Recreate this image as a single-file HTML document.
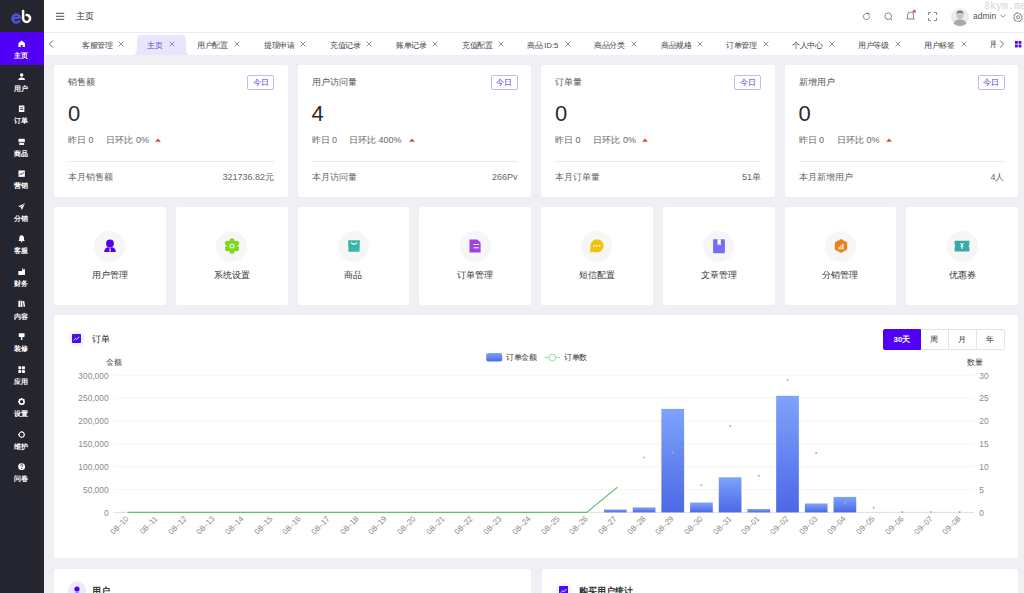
<!DOCTYPE html><html><head><meta charset="utf-8"><style>
*{box-sizing:border-box;margin:0;padding:0}
html,body{width:1024px;height:593px;overflow:hidden;background:#efeff4;font-family:"Liberation Sans",sans-serif;color:#333}
.a{position:absolute;white-space:nowrap}
#side{position:absolute;left:0;top:0;width:44px;height:593px;background:#25252f}
.sl{position:absolute;left:-0.7px;width:44px;text-align:center;font-size:7.3px;line-height:8px;font-weight:bold;color:#fff}
.sic{position:absolute;left:17.6px}
#hdr{position:absolute;left:44px;top:0;width:980px;height:33px;background:#fff;border-bottom:1px solid #ededf1}
#tabs{position:absolute;left:44px;top:33px;width:980px;height:22px;background:#fff}
.tb{position:absolute;top:40.6px;font-size:8px;line-height:9px;color:#444;white-space:nowrap;transform:scale(0.95);transform-origin:0 0}
.tx{position:absolute;top:41.1px}
.card{position:absolute;background:#fff;border-radius:2px}
.st{position:absolute;font-size:9px;line-height:9px;color:#555;white-space:nowrap}
.badge{position:absolute;width:27px;height:15.4px;border:1px solid #c2b8f3;border-radius:2px;color:#5a33e6;font-size:7.5px;line-height:13.5px;text-align:center;font-weight:500}
.big{position:absolute;font-size:22px;line-height:22px;color:#2b2b2b}
.sub{position:absolute;font-size:9px;line-height:9px;color:#666;white-space:nowrap}
.hr{position:absolute;height:1px;background:#ebebef}
.ic{position:absolute;width:31px;height:31px;border-radius:50%;background:#f6f6f7}
.nl{position:absolute;left:0;width:100%;text-align:center;font-size:9px;line-height:9px;color:#333;font-weight:500}
.yl{position:absolute;font-size:8.4px;line-height:8px;color:#8a8a8a;white-space:nowrap}
.xl{position:absolute;font-size:8px;line-height:8px;color:#8a8a8a;white-space:nowrap;transform-origin:100% 0;transform:rotate(-45deg)}
.btn{position:absolute;top:329px;height:20.8px;font-size:8px;line-height:19.2px;font-weight:500;text-align:center;color:#333;border:1px solid #e4e4e8;background:#fff}
</style></head><body>
<div id="side">
<svg class="a" style="left:0;top:0" width="44" height="32" viewBox="0 0 44 32">
<path d="M13.4 18.5 L20 17.3 A3.9 3.9 0 1 0 19.3 21" fill="none" stroke="#5052d8" stroke-width="2.5" stroke-linecap="round"/>
<path d="M23.1 11 V18.4 A3.5 3.5 0 1 0 26.6 14.9" fill="none" stroke="#fff" stroke-width="2.5" stroke-linecap="round"/>
</svg>
<div class="a" style="left:0;top:32px;width:44px;height:33px;background:#5000f5"></div>
<div class="sl" style="top:52.10px">主页</div>
<svg class="sic" style="top:40.00px" width="7.3" height="7.3" viewBox="0 0 8 8"><path d="M4 0.6 L7.6 3.6 V7.6 H5 V5.4 H3 V7.6 H0.4 V3.6 Z" fill="#fff"/></svg>
<div class="sl" style="top:84.65px">用户</div>
<svg class="sic" style="top:72.55px" width="7.3" height="7.3" viewBox="0 0 8 8"><circle cx="4" cy="2.2" r="1.9" fill="#fff"/><path d="M0.3 7.6 Q0.5 4.8 4 4.8 Q7.5 4.8 7.7 7.6 Z" fill="#fff"/></svg>
<div class="sl" style="top:117.20px">订单</div>
<svg class="sic" style="top:105.10px" width="7.3" height="7.3" viewBox="0 0 8 8"><rect x="1" y="0.5" width="6" height="7.2" rx="0.6" fill="#fff"/><rect x="2.3" y="2.6" width="3.4" height="0.9" fill="#25252f"/><rect x="2.3" y="4.6" width="3.4" height="0.9" fill="#25252f"/></svg>
<div class="sl" style="top:149.75px">商品</div>
<svg class="sic" style="top:137.65px" width="7.3" height="7.3" viewBox="0 0 8 8"><rect x="0.5" y="0.8" width="7" height="4.2" rx="1" fill="#fff"/><rect x="1.3" y="5.6" width="5.4" height="2" fill="#fff"/><rect x="0.5" y="4.2" width="7" height="0.7" fill="#25252f"/></svg>
<div class="sl" style="top:182.30px">营销</div>
<svg class="sic" style="top:170.20px" width="7.3" height="7.3" viewBox="0 0 8 8"><rect x="0.5" y="0.5" width="7" height="7" fill="#fff"/><path d="M1.5 5.8 L3.3 3.8 L4.5 4.8 L6.6 2.3" fill="none" stroke="#25252f" stroke-width="0.9"/></svg>
<div class="sl" style="top:214.85px">分销</div>
<svg class="sic" style="top:202.75px" width="7.3" height="7.3" viewBox="0 0 8 8"><path d="M7.8 0.3 L0.3 3.6 L3 4.6 L4.2 7.7 Z" fill="#fff"/><path d="M7.8 0.3 L3 4.6" stroke="#25252f" stroke-width="0.6"/></svg>
<div class="sl" style="top:247.40px">客服</div>
<svg class="sic" style="top:235.30px" width="7.3" height="7.3" viewBox="0 0 8 8"><path d="M4 0.4 Q6.6 0.6 6.6 3.6 V5.6 L7.6 6.6 H0.4 L1.4 5.6 V3.6 Q1.4 0.6 4 0.4 Z" fill="#fff"/><circle cx="4" cy="7.3" r="0.8" fill="#fff"/></svg>
<div class="sl" style="top:279.95px">财务</div>
<svg class="sic" style="top:267.85px" width="7.3" height="7.3" viewBox="0 0 8 8"><path d="M0.4 3.4 H4.2 L5.4 2 L7.6 1.2 V7.6 H0.4 Z" fill="#fff"/><rect x="4.6" y="0.3" width="1" height="2.6" fill="#fff"/></svg>
<div class="sl" style="top:312.50px">内容</div>
<svg class="sic" style="top:300.40px" width="7.3" height="7.3" viewBox="0 0 8 8"><rect x="0.4" y="0.8" width="2" height="6.8" fill="#fff"/><rect x="2.9" y="0.8" width="2" height="6.8" fill="#fff"/><path d="M5.3 1.4 L6.8 1.0 L7.8 7.2 L6.3 7.6 Z" fill="#fff"/></svg>
<div class="sl" style="top:345.05px">装修</div>
<svg class="sic" style="top:332.95px" width="7.3" height="7.3" viewBox="0 0 8 8"><rect x="0.8" y="0.3" width="6.4" height="4" rx="0.5" fill="#fff"/><rect x="3.2" y="4.3" width="1.6" height="3.4" fill="#fff"/></svg>
<div class="sl" style="top:377.60px">应用</div>
<svg class="sic" style="top:365.50px" width="7.3" height="7.3" viewBox="0 0 8 8"><rect x="0.4" y="0.4" width="3.2" height="3.2" rx="0.5" fill="#fff"/><rect x="4.4" y="0.4" width="3.2" height="3.2" rx="0.5" fill="#fff"/><rect x="0.4" y="4.4" width="3.2" height="3.2" rx="0.5" fill="#fff"/><rect x="4.4" y="4.4" width="3.2" height="3.2" rx="0.5" fill="#fff"/></svg>
<div class="sl" style="top:410.15px">设置</div>
<svg class="sic" style="top:398.05px" width="7.3" height="7.3" viewBox="0 0 8 8"><circle cx="4" cy="4" r="2.6" fill="none" stroke="#fff" stroke-width="1.6"/><g stroke="#fff" stroke-width="1.5"><path d="M4 0 V1.6 M4 6.4 V8 M0 4 H1.6 M6.4 4 H8 M1.2 1.2 L2.2 2.2 M5.8 5.8 L6.8 6.8 M1.2 6.8 L2.2 5.8 M5.8 2.2 L6.8 1.2"/></g></svg>
<div class="sl" style="top:442.70px">维护</div>
<svg class="sic" style="top:430.60px" width="7.3" height="7.3" viewBox="0 0 8 8"><circle cx="4" cy="4" r="2.8" fill="none" stroke="#fff" stroke-width="1.1"/><g stroke="#fff" stroke-width="1.2"><path d="M4 0 V1.2 M4 6.8 V8 M0 4 H1.2 M6.8 4 H8"/></g></svg>
<div class="sl" style="top:475.25px">问卷</div>
<svg class="sic" style="top:463.15px" width="7.3" height="7.3" viewBox="0 0 8 8"><circle cx="4" cy="4" r="3.8" fill="#fff"/><path d="M2.8 3 Q2.8 1.8 4 1.8 Q5.2 1.8 5.2 2.9 Q5.2 3.6 4.3 4.1 V4.9" fill="none" stroke="#25252f" stroke-width="0.9"/><circle cx="4.2" cy="6.1" r="0.55" fill="#25252f"/></svg>
</div>
<div id="hdr"></div>
<svg class="a" style="left:55px;top:11px" width="10" height="10" viewBox="0 0 10 10"><g stroke="#4a4a4a" stroke-width="1"><path d="M1 2.3 H9.2 M1 5.3 H9.2 M1 8.3 H9.2"/></g></svg>
<div class="a" style="left:76px;top:12px;font-size:9px;line-height:9px;color:#333">主页</div>
<svg class="a" style="left:862px;top:12px" width="9" height="9" viewBox="0 0 9 9"><path d="M7.6 4.5 A3.1 3.1 0 1 1 6.3 2" fill="none" stroke="#777" stroke-width="0.9"/><path d="M5.2 0.8 L7.4 1.6 L6.6 3.6" fill="none" stroke="#777" stroke-width="0.9"/></svg>
<svg class="a" style="left:884px;top:12px" width="9" height="9" viewBox="0 0 9 9"><circle cx="4.2" cy="4.2" r="3.3" fill="none" stroke="#777" stroke-width="0.9"/><path d="M6.6 6.6 L8.2 8.2" stroke="#777" stroke-width="0.9"/></svg>
<svg class="a" style="left:906px;top:9px" width="11" height="12" viewBox="0 0 11 12"><path d="M4.5 3 Q7.5 3 7.5 6.2 V9 L8.4 10 H0.6 L1.5 9 V6.2 Q1.5 3 4.5 3 Z" fill="none" stroke="#777" stroke-width="0.9"/><circle cx="8.3" cy="2.3" r="1.6" fill="#e5484d"/></svg>
<svg class="a" style="left:928px;top:12px" width="9" height="9" viewBox="0 0 9 9"><g fill="none" stroke="#777" stroke-width="0.9"><path d="M0.5 3 V0.5 H3 M6 0.5 H8.5 V3 M8.5 6 V8.5 H6 M3 8.5 H0.5 V6"/></g></svg>
<svg class="a" style="left:951px;top:7.5px" width="18" height="18" viewBox="0 0 18 18"><circle cx="9" cy="9" r="9" fill="#ebebeb"/><ellipse cx="9" cy="7.4" rx="3.4" ry="4" fill="#c9c9c9"/><path d="M2.6 15.8 Q3.6 11.6 9 11.6 Q14.4 11.6 15.4 15.8 Q12.8 18 9 18 Q5.2 18 2.6 15.8 Z" fill="#a9a9a9"/><path d="M5.4 6.6 Q5.2 2.6 9 2.6 Q12.8 2.6 12.6 6.6 Q12 4.6 9 4.8 Q6 4.6 5.4 6.6 Z" fill="#7a7a7a"/></svg>
<div class="a" style="left:973px;top:12px;font-size:8.5px;line-height:9px;color:#555">admin</div>
<svg class="a" style="left:1000px;top:14px" width="6" height="4" viewBox="0 0 6 4"><path d="M0.5 0.8 L3 3 L5.5 0.8" fill="none" stroke="#777" stroke-width="0.8"/></svg>
<svg class="a" style="left:1012.5px;top:11.5px" width="10" height="10" viewBox="0 0 10 10"><path d="M5 0.8 L6 2 L7.6 1.9 L7.9 3.5 L9.2 4.4 L8.6 5.9 L9.2 7.4 L7.7 8 L7.2 9.4 L5.7 9 L4.4 9.8 L3.4 8.7 L1.8 8.6 L1.7 7 L0.6 5.9 L1.4 4.6 L0.9 3 L2.4 2.5 L3 1 Z" fill="none" stroke="#777" stroke-width="0.9" stroke-linejoin="round"/><circle cx="5" cy="5.3" r="1.6" fill="none" stroke="#777" stroke-width="0.9"/></svg>
<div class="a" style="left:984px;top:0.5px;font-family:'Liberation Mono',monospace;font-size:10px;line-height:11px;color:#d4d4d8">8kym.me</div>
<div id="tabs"></div>
<svg class="a" style="left:133px;top:35px" width="57" height="20" viewBox="0 0 57 20"><path d="M0 20 Q3 20 3.6 16 L4.4 3 Q4.6 0 7.6 0 H49.4 Q52.4 0 52.6 3 L53.4 16 Q54 20 57 20 Z" fill="#e8e6fb"/></svg>
<div class="tb" style="left:82.0px;color:#444">客服管理</div>
<svg class="tx" style="left:118.2px" width="6" height="6" viewBox="0 0 6 6"><path d="M0.6 0.6 L5.4 5.4 M5.4 0.6 L0.6 5.4" stroke="#777" stroke-width="0.8"/></svg>
<div class="tb" style="left:147.4px;color:#5b3fe0">主页</div>
<svg class="tx" style="left:168.5px" width="6" height="6" viewBox="0 0 6 6"><path d="M0.6 0.6 L5.4 5.4 M5.4 0.6 L0.6 5.4" stroke="#7a66e6" stroke-width="0.8"/></svg>
<div class="tb" style="left:197.0px;color:#444">用户配置</div>
<svg class="tx" style="left:233.7px" width="6" height="6" viewBox="0 0 6 6"><path d="M0.6 0.6 L5.4 5.4 M5.4 0.6 L0.6 5.4" stroke="#777" stroke-width="0.8"/></svg>
<div class="tb" style="left:264.0px;color:#444">提现申请</div>
<svg class="tx" style="left:300.2px" width="6" height="6" viewBox="0 0 6 6"><path d="M0.6 0.6 L5.4 5.4 M5.4 0.6 L0.6 5.4" stroke="#777" stroke-width="0.8"/></svg>
<div class="tb" style="left:330.2px;color:#444">充值记录</div>
<svg class="tx" style="left:365.7px" width="6" height="6" viewBox="0 0 6 6"><path d="M0.6 0.6 L5.4 5.4 M5.4 0.6 L0.6 5.4" stroke="#777" stroke-width="0.8"/></svg>
<div class="tb" style="left:395.5px;color:#444">账单记录</div>
<svg class="tx" style="left:431.7px" width="6" height="6" viewBox="0 0 6 6"><path d="M0.6 0.6 L5.4 5.4 M5.4 0.6 L0.6 5.4" stroke="#777" stroke-width="0.8"/></svg>
<div class="tb" style="left:461.5px;color:#444">充值配置</div>
<svg class="tx" style="left:497.7px" width="6" height="6" viewBox="0 0 6 6"><path d="M0.6 0.6 L5.4 5.4 M5.4 0.6 L0.6 5.4" stroke="#777" stroke-width="0.8"/></svg>
<div class="tb" style="left:527.3px;color:#444">商品 ID:5</div>
<svg class="tx" style="left:565.2px" width="6" height="6" viewBox="0 0 6 6"><path d="M0.6 0.6 L5.4 5.4 M5.4 0.6 L0.6 5.4" stroke="#777" stroke-width="0.8"/></svg>
<div class="tb" style="left:594.3px;color:#444">商品分类</div>
<svg class="tx" style="left:630.7px" width="6" height="6" viewBox="0 0 6 6"><path d="M0.6 0.6 L5.4 5.4 M5.4 0.6 L0.6 5.4" stroke="#777" stroke-width="0.8"/></svg>
<div class="tb" style="left:660.5px;color:#444">商品规格</div>
<svg class="tx" style="left:696.7px" width="6" height="6" viewBox="0 0 6 6"><path d="M0.6 0.6 L5.4 5.4 M5.4 0.6 L0.6 5.4" stroke="#777" stroke-width="0.8"/></svg>
<div class="tb" style="left:726.4px;color:#444">订单管理</div>
<svg class="tx" style="left:762.7px" width="6" height="6" viewBox="0 0 6 6"><path d="M0.6 0.6 L5.4 5.4 M5.4 0.6 L0.6 5.4" stroke="#777" stroke-width="0.8"/></svg>
<div class="tb" style="left:792.2px;color:#444">个人中心</div>
<svg class="tx" style="left:828.7px" width="6" height="6" viewBox="0 0 6 6"><path d="M0.6 0.6 L5.4 5.4 M5.4 0.6 L0.6 5.4" stroke="#777" stroke-width="0.8"/></svg>
<div class="tb" style="left:858.0px;color:#444">用户等级</div>
<svg class="tx" style="left:894.7px" width="6" height="6" viewBox="0 0 6 6"><path d="M0.6 0.6 L5.4 5.4 M5.4 0.6 L0.6 5.4" stroke="#777" stroke-width="0.8"/></svg>
<div class="tb" style="left:924.3px;color:#444">用户标签</div>
<svg class="tx" style="left:960.7px" width="6" height="6" viewBox="0 0 6 6"><path d="M0.6 0.6 L5.4 5.4 M5.4 0.6 L0.6 5.4" stroke="#777" stroke-width="0.8"/></svg>
<div class="a" style="left:989.5px;top:40px;width:7px;height:9px;overflow:hidden;font-size:8px;line-height:9px;color:#444">用</div>
<div class="a" style="left:996px;top:34px;width:12px;height:21px;background:#fff"></div>
<svg class="a" style="left:48px;top:40px" width="6" height="8" viewBox="0 0 6 8"><path d="M4.8 0.6 L1.4 4 L4.8 7.4" fill="none" stroke="#555" stroke-width="0.9"/></svg>
<svg class="a" style="left:998.5px;top:40px" width="6" height="8" viewBox="0 0 6 8"><path d="M1.2 0.6 L4.6 4 L1.2 7.4" fill="none" stroke="#555" stroke-width="0.9"/></svg>
<svg class="a" style="left:1014.5px;top:41px" width="7" height="7" viewBox="0 0 7 7"><g fill="#5000f5"><rect x="0" y="0" width="2.8" height="2.8"/><rect x="3.6" y="0" width="2.8" height="2.8"/><rect x="0" y="3.6" width="2.8" height="2.8"/><rect x="3.6" y="3.6" width="2.8" height="2.8"/></g></svg>
<div class="card" style="left:54.00px;top:65px;width:233.50px;height:131.8px">
<div class="st" style="left:14px;top:12.6px">销售额</div>
<div class="badge" style="right:13.5px;top:10px">今日</div>
<div class="big" style="left:14px;top:38px">0</div>
<div class="sub" style="left:14px;top:70.5px">昨日 0</div>
<div class="sub" style="left:52.4px;top:70.5px">日环比 0%</div>
</div>
<div class="hr" style="left:68.00px;top:161px;width:206.00px"></div>
<div class="sub" style="left:68.00px;top:172.7px">本月销售额</div>
<div class="sub" style="left:174.00px;top:172.7px;width:100px;text-align:right">321736.82元</div>
<div class="card" style="left:297.50px;top:65px;width:233.50px;height:131.8px">
<div class="st" style="left:14px;top:12.6px">用户访问量</div>
<div class="badge" style="right:13.5px;top:10px">今日</div>
<div class="big" style="left:14px;top:38px">4</div>
<div class="sub" style="left:14px;top:70.5px">昨日 0</div>
<div class="sub" style="left:51.5px;top:70.5px">日环比 400%</div>
</div>
<div class="hr" style="left:311.50px;top:161px;width:206.00px"></div>
<div class="sub" style="left:311.50px;top:172.7px">本月访问量</div>
<div class="sub" style="left:417.50px;top:172.7px;width:100px;text-align:right">266Pv</div>
<div class="card" style="left:541.00px;top:65px;width:233.50px;height:131.8px">
<div class="st" style="left:14px;top:12.6px">订单量</div>
<div class="badge" style="right:13.5px;top:10px">今日</div>
<div class="big" style="left:14px;top:38px">0</div>
<div class="sub" style="left:14px;top:70.5px">昨日 0</div>
<div class="sub" style="left:52.4px;top:70.5px">日环比 0%</div>
</div>
<div class="hr" style="left:555.00px;top:161px;width:206.00px"></div>
<div class="sub" style="left:555.00px;top:172.7px">本月订单量</div>
<div class="sub" style="left:661.00px;top:172.7px;width:100px;text-align:right">51单</div>
<div class="card" style="left:784.50px;top:65px;width:233.50px;height:131.8px">
<div class="st" style="left:14px;top:12.6px">新增用户</div>
<div class="badge" style="right:13.5px;top:10px">今日</div>
<div class="big" style="left:14px;top:38px">0</div>
<div class="sub" style="left:14px;top:70.5px">昨日 0</div>
<div class="sub" style="left:52.4px;top:70.5px">日环比 0%</div>
</div>
<div class="hr" style="left:798.50px;top:161px;width:206.00px"></div>
<div class="sub" style="left:798.50px;top:172.7px">本月新增用户</div>
<div class="sub" style="left:904.50px;top:172.7px;width:100px;text-align:right">4人</div>
<svg class="a" style="left:155.0px;top:138.1px" width="6" height="4" viewBox="0 0 6 4"><path d="M0.2 3.8 L3 0.4 L5.8 3.8 Z" fill="#e3413b"/></svg>
<svg class="a" style="left:409.0px;top:138.1px" width="6" height="4" viewBox="0 0 6 4"><path d="M0.2 3.8 L3 0.4 L5.8 3.8 Z" fill="#e3413b"/></svg>
<svg class="a" style="left:642.0px;top:138.1px" width="6" height="4" viewBox="0 0 6 4"><path d="M0.2 3.8 L3 0.4 L5.8 3.8 Z" fill="#e3413b"/></svg>
<svg class="a" style="left:885.5px;top:138.1px" width="6" height="4" viewBox="0 0 6 4"><path d="M0.2 3.8 L3 0.4 L5.8 3.8 Z" fill="#e3413b"/></svg>
<div class="card" style="left:54.00px;top:207px;width:111.75px;height:98.3px">
<div class="ic" style="left:40.38px;top:23.5px"></div>
<svg class="a" style="left:48.17px;top:31.2px" width="16" height="16" viewBox="0 0 16 16"><circle cx="8" cy="5.5" r="3.9" fill="#5000f5"/><path d="M2.2 14 Q2.3 9.8 6 9.3 L8 10 L10 9.3 Q13.7 9.8 13.8 14 Z" fill="#5000f5"/><path d="M7.5 10.3 H8.5 L8.7 13.4 H7.3 Z" fill="#fff"/></svg>
<div class="nl" style="top:64px">用户管理</div>
</div>
<div class="card" style="left:175.75px;top:207px;width:111.75px;height:98.3px">
<div class="ic" style="left:40.38px;top:23.5px"></div>
<svg class="a" style="left:48.17px;top:31.2px" width="16" height="16" viewBox="0 0 16 16"><g fill="#7fd61e"><circle cx="8" cy="8" r="5.6"/><circle cx="8" cy="2.7" r="2.5"/><circle cx="8" cy="13.3" r="2.5"/><circle cx="3.4" cy="5.35" r="2.5"/><circle cx="12.6" cy="5.35" r="2.5"/><circle cx="3.4" cy="10.65" r="2.5"/><circle cx="12.6" cy="10.65" r="2.5"/></g><circle cx="8" cy="8" r="2.6" fill="#d9f5bd"/><circle cx="8" cy="8" r="1.3" fill="#7fd61e"/></svg>
<div class="nl" style="top:64px">系统设置</div>
</div>
<div class="card" style="left:297.50px;top:207px;width:111.75px;height:98.3px">
<div class="ic" style="left:40.38px;top:23.5px"></div>
<svg class="a" style="left:48.17px;top:31.2px" width="16" height="16" viewBox="0 0 16 16"><path d="M2.1 2.2 H13.9 L13.5 13.8 H2.5 Z" fill="#3bb5aa"/><path d="M5 4.6 Q8 7.6 11 4.6" fill="none" stroke="#fff" stroke-width="1.3"/></svg>
<div class="nl" style="top:64px">商品</div>
</div>
<div class="card" style="left:419.25px;top:207px;width:111.75px;height:98.3px">
<div class="ic" style="left:40.38px;top:23.5px"></div>
<svg class="a" style="left:48.17px;top:31.2px" width="16" height="16" viewBox="0 0 16 16"><path d="M2.5 1.6 H10.4 L13.6 4.8 V14.4 H2.5 Z" fill="#a340e2"/><rect x="6.6" y="6" width="5.4" height="1" fill="#fff"/><rect x="6.6" y="9.3" width="5.4" height="1" fill="#fff"/></svg>
<div class="nl" style="top:64px">订单管理</div>
</div>
<div class="card" style="left:541.00px;top:207px;width:111.75px;height:98.3px">
<div class="ic" style="left:40.38px;top:23.5px"></div>
<svg class="a" style="left:48.17px;top:31.2px" width="16" height="16" viewBox="0 0 16 16"><circle cx="8" cy="7.8" r="6.6" fill="#f0c20c"/><path d="M1.6 9 L1.2 14.4 L6 13.6 Z" fill="#f0c20c"/><g fill="#fff"><circle cx="5.3" cy="7.8" r="0.9"/><circle cx="8" cy="7.8" r="0.9"/><circle cx="10.7" cy="7.8" r="0.9"/></g></svg>
<div class="nl" style="top:64px">短信配置</div>
</div>
<div class="card" style="left:662.75px;top:207px;width:111.75px;height:98.3px">
<div class="ic" style="left:40.38px;top:23.5px"></div>
<svg class="a" style="left:48.17px;top:31.2px" width="16" height="16" viewBox="0 0 16 16"><rect x="2.1" y="1.2" width="11.8" height="14" rx="0.8" fill="#7a6cf0"/><path d="M6.6 1.2 H9.8 V7.4 L8.2 6.2 L6.6 7.4 Z" fill="#fff"/></svg>
<div class="nl" style="top:64px">文章管理</div>
</div>
<div class="card" style="left:784.50px;top:207px;width:111.75px;height:98.3px">
<div class="ic" style="left:40.38px;top:23.5px"></div>
<svg class="a" style="left:48.17px;top:31.2px" width="16" height="16" viewBox="0 0 16 16"><path d="M8 1 L14.2 4.5 V11.5 L8 15 L1.8 11.5 V4.5 Z" fill="#ee7f18"/><g fill="#fff"><rect x="5.5" y="8.8" width="1.2" height="2.6"/><rect x="7.4" y="7.2" width="1.2" height="4.2"/><rect x="9.3" y="5.6" width="1.2" height="5.8"/></g></svg>
<div class="nl" style="top:64px">分销管理</div>
</div>
<div class="card" style="left:906.25px;top:207px;width:111.75px;height:98.3px">
<div class="ic" style="left:40.38px;top:23.5px"></div>
<svg class="a" style="left:48.17px;top:31.2px" width="16" height="16" viewBox="0 0 16 16"><path d="M0.6 2.8 H15.4 V6 Q14 8 15.4 10 V13.4 H0.6 V10 Q2 8 0.6 6 Z" fill="#39aaa5"/><path d="M6.5 5 L8 7.2 L9.5 5 M6.5 8.2 H9.5 M8 7.2 V11" fill="none" stroke="#fff" stroke-width="1"/></svg>
<div class="nl" style="top:64px">优惠券</div>
</div>
<div class="card" style="left:54px;top:315.2px;width:964px;height:242.9px"></div>
<div class="a" style="left:67.2px;top:329px;width:19px;height:19px;border-radius:50%;background:radial-gradient(circle,#ece8ff 0,#f6f4ff 55%,rgba(255,255,255,0) 72%)"></div>
<svg class="a" style="left:72.2px;top:334px" width="9" height="9" viewBox="0 0 9 9"><rect width="9" height="9" rx="0.8" fill="#4c0ee0"/><path d="M1.8 6.4 L3.6 4.4 L5 5.4 L7.2 2.8" fill="none" stroke="#fff" stroke-width="0.8"/></svg>
<div class="a" style="left:91.5px;top:334px;font-size:9px;line-height:10px;color:#222;font-weight:500">订单</div>
<div class="btn" style="left:883.2px;width:37.6px;background:#5000f5;border-color:#5000f5;color:#fff;font-weight:bold;border-radius:2px 0 0 2px">30天</div>
<div class="btn" style="left:920.8px;width:28.2px;border-left:none">周</div>
<div class="btn" style="left:948.5px;width:28.2px;border-left:none">月</div>
<div class="btn" style="left:976.5px;width:28px;border-left:none;border-radius:0 2px 2px 0">年</div>
<svg class="a" style="left:486px;top:353px" width="17" height="9" viewBox="0 0 17 9"><defs><linearGradient id="lg" x1="0" y1="0" x2="0" y2="1"><stop offset="0" stop-color="#7ea1fb"/><stop offset="1" stop-color="#4d6ae8"/></linearGradient></defs><rect x="0.2" y="0" width="16" height="8.6" rx="2" fill="url(#lg)"/></svg>
<div class="a" style="left:506.3px;top:353px;font-size:8px;line-height:9px;color:#333;transform:scale(0.94);transform-origin:0 0">订单金额</div>
<svg class="a" style="left:543.5px;top:353px" width="17" height="9" viewBox="0 0 17 9"><path d="M0.5 4.5 H16" stroke="#7fd492" stroke-width="0.8"/><circle cx="8.3" cy="4.5" r="3.4" fill="#fff" stroke="#7fd492" stroke-width="0.8"/></svg>
<div class="a" style="left:563.8px;top:353px;font-size:8px;line-height:9px;color:#333;transform:scale(0.94);transform-origin:0 0">订单数</div>
<div class="a" style="left:105.9px;top:358.1px;font-size:8px;line-height:9px;color:#444;transform:scale(0.94);transform-origin:0 0">金额</div>
<div class="a" style="left:966.8px;top:358.1px;font-size:8px;line-height:9px;color:#444;transform:scale(0.94);transform-origin:0 0">数量</div>
<div class="yl" style="left:48.6px;top:508.70px;width:60px;text-align:right">0</div>
<div class="yl" style="left:979.3px;top:508.80px">0</div>
<div class="yl" style="left:48.6px;top:485.83px;width:60px;text-align:right">50,000</div>
<div class="yl" style="left:979.3px;top:485.93px">5</div>
<div class="yl" style="left:48.6px;top:462.97px;width:60px;text-align:right">100,000</div>
<div class="yl" style="left:979.3px;top:463.07px">10</div>
<div class="yl" style="left:48.6px;top:440.10px;width:60px;text-align:right">150,000</div>
<div class="yl" style="left:979.3px;top:440.20px">15</div>
<div class="yl" style="left:48.6px;top:417.23px;width:60px;text-align:right">200,000</div>
<div class="yl" style="left:979.3px;top:417.33px">20</div>
<div class="yl" style="left:48.6px;top:394.37px;width:60px;text-align:right">250,000</div>
<div class="yl" style="left:979.3px;top:394.47px">25</div>
<div class="yl" style="left:48.6px;top:371.50px;width:60px;text-align:right">300,000</div>
<div class="yl" style="left:979.3px;top:371.60px">30</div>
<svg class="a" style="left:0;top:0" width="1024" height="593" viewBox="0 0 1024 593">
<path d="M113.3 489.53 H974.0" stroke="#f2f2f4" stroke-width="0.8"/>
<path d="M113.3 466.67 H974.0" stroke="#f2f2f4" stroke-width="0.8"/>
<path d="M113.3 443.80 H974.0" stroke="#f2f2f4" stroke-width="0.8"/>
<path d="M113.3 420.93 H974.0" stroke="#f2f2f4" stroke-width="0.8"/>
<path d="M113.3 398.07 H974.0" stroke="#f2f2f4" stroke-width="0.8"/>
<path d="M113.3 375.20 H974.0" stroke="#f2f2f4" stroke-width="0.8"/>
<path d="M113.3 512.40 H974.0" stroke="#d8d8dc" stroke-width="0.8"/>
<defs><linearGradient id="bg" x1="0" y1="0" x2="0" y2="1"><stop offset="0" stop-color="#7ea3fb"/><stop offset="1" stop-color="#4c68e6"/></linearGradient></defs>
<rect x="604.02" y="509.50" width="22.7" height="2.90" fill="url(#bg)"/>
<rect x="632.71" y="507.40" width="22.7" height="5.00" fill="url(#bg)"/>
<rect x="661.40" y="408.90" width="22.7" height="103.50" fill="url(#bg)"/>
<rect x="690.09" y="502.50" width="22.7" height="9.90" fill="url(#bg)"/>
<rect x="718.78" y="477.30" width="22.7" height="35.10" fill="url(#bg)"/>
<rect x="747.47" y="509.00" width="22.7" height="3.40" fill="url(#bg)"/>
<rect x="776.16" y="395.80" width="22.7" height="116.60" fill="url(#bg)"/>
<rect x="804.86" y="503.50" width="22.7" height="8.90" fill="url(#bg)"/>
<rect x="833.54" y="496.90" width="22.7" height="15.50" fill="url(#bg)"/>
<polyline points="127.6,512.4 156.3,512.4 185.0,512.4 213.7,512.4 242.4,512.4 271.1,512.4 299.8,512.4 328.5,512.4 357.2,512.4 385.9,512.4 414.5,512.4 443.2,512.4 471.9,512.4 500.6,512.4 529.3,512.4 558.0,512.4 586.7,512.4 617.4,487.3" fill="none" stroke="#5cc46f" stroke-width="1.1"/>
<circle cx="644.1" cy="457.6" r="1" fill="#a9b3a8"/>
<circle cx="672.8" cy="452.6" r="1" fill="#a9b3a8"/>
<circle cx="701.4" cy="485.2" r="1" fill="#a9b3a8"/>
<circle cx="730.1" cy="425.9" r="1" fill="#a9b3a8"/>
<circle cx="758.8" cy="475.7" r="1" fill="#a9b3a8"/>
<circle cx="787.5" cy="380.1" r="1" fill="#a9b3a8"/>
<circle cx="816.2" cy="452.9" r="1" fill="#a9b3a8"/>
<circle cx="844.9" cy="502.7" r="1" fill="#a9b3a8"/>
<circle cx="873.6" cy="507.8" r="1" fill="#a9b3a8"/>
<circle cx="902.3" cy="512.0" r="1" fill="#a9b3a8"/>
<circle cx="931.0" cy="512.0" r="1" fill="#a9b3a8"/>
<circle cx="959.7" cy="512.0" r="1" fill="#a9b3a8"/>
</svg>
<div class="xl" style="left:95.1px;top:514.5px;width:30px;text-align:right">08–10</div>
<div class="xl" style="left:123.8px;top:514.5px;width:30px;text-align:right">08–11</div>
<div class="xl" style="left:152.5px;top:514.5px;width:30px;text-align:right">08–12</div>
<div class="xl" style="left:181.2px;top:514.5px;width:30px;text-align:right">08–13</div>
<div class="xl" style="left:209.9px;top:514.5px;width:30px;text-align:right">08–14</div>
<div class="xl" style="left:238.6px;top:514.5px;width:30px;text-align:right">08–15</div>
<div class="xl" style="left:267.3px;top:514.5px;width:30px;text-align:right">08–16</div>
<div class="xl" style="left:296.0px;top:514.5px;width:30px;text-align:right">08–17</div>
<div class="xl" style="left:324.7px;top:514.5px;width:30px;text-align:right">08–18</div>
<div class="xl" style="left:353.4px;top:514.5px;width:30px;text-align:right">08–19</div>
<div class="xl" style="left:382.0px;top:514.5px;width:30px;text-align:right">08–20</div>
<div class="xl" style="left:410.7px;top:514.5px;width:30px;text-align:right">08–21</div>
<div class="xl" style="left:439.4px;top:514.5px;width:30px;text-align:right">08–22</div>
<div class="xl" style="left:468.1px;top:514.5px;width:30px;text-align:right">08–23</div>
<div class="xl" style="left:496.8px;top:514.5px;width:30px;text-align:right">08–24</div>
<div class="xl" style="left:525.5px;top:514.5px;width:30px;text-align:right">08–25</div>
<div class="xl" style="left:554.2px;top:514.5px;width:30px;text-align:right">08–26</div>
<div class="xl" style="left:582.9px;top:514.5px;width:30px;text-align:right">08–27</div>
<div class="xl" style="left:611.6px;top:514.5px;width:30px;text-align:right">08–28</div>
<div class="xl" style="left:640.3px;top:514.5px;width:30px;text-align:right">08–29</div>
<div class="xl" style="left:668.9px;top:514.5px;width:30px;text-align:right">08–30</div>
<div class="xl" style="left:697.6px;top:514.5px;width:30px;text-align:right">08–31</div>
<div class="xl" style="left:726.3px;top:514.5px;width:30px;text-align:right">09–01</div>
<div class="xl" style="left:755.0px;top:514.5px;width:30px;text-align:right">09–02</div>
<div class="xl" style="left:783.7px;top:514.5px;width:30px;text-align:right">09–03</div>
<div class="xl" style="left:812.4px;top:514.5px;width:30px;text-align:right">09–04</div>
<div class="xl" style="left:841.1px;top:514.5px;width:30px;text-align:right">09–05</div>
<div class="xl" style="left:869.8px;top:514.5px;width:30px;text-align:right">09–06</div>
<div class="xl" style="left:898.5px;top:514.5px;width:30px;text-align:right">09–07</div>
<div class="xl" style="left:927.2px;top:514.5px;width:30px;text-align:right">09–08</div>
<div class="card" style="left:54px;top:568.8px;width:477.4px;height:40px"></div>
<div class="card" style="left:542.4px;top:568.8px;width:475.6px;height:40px"></div>
<div class="a" style="left:68px;top:581px;width:18px;height:18px;border-radius:50%;background:#ecebfd"></div>
<svg class="a" style="left:72.3px;top:585.6px" width="10" height="11" viewBox="0 0 10 11"><circle cx="5" cy="3" r="2.6" fill="#5000f5"/><path d="M0.5 11 Q0.8 6.6 5 6.6 Q9.2 6.6 9.5 11 Z" fill="#5000f5"/></svg>
<div class="a" style="left:92px;top:586px;font-size:9px;line-height:10px;color:#333;font-weight:bold">用户</div>
<div class="a" style="left:554px;top:580.5px;width:19.5px;height:19.5px;border-radius:50%;background:radial-gradient(circle,#ece8ff 0,#f6f4ff 55%,rgba(255,255,255,0) 72%)"></div>
<svg class="a" style="left:559px;top:585.8px" width="9.4" height="9.4" viewBox="0 0 9 9"><rect width="9" height="9" rx="0.8" fill="#4c0ee0"/><path d="M1.8 6.4 L3.6 4.4 L5 5.4 L7.2 2.8" fill="none" stroke="#fff" stroke-width="0.8"/></svg>
<div class="a" style="left:578.5px;top:586px;font-size:9px;line-height:10px;color:#333;font-weight:bold">购买用户统计</div>
</body></html>
